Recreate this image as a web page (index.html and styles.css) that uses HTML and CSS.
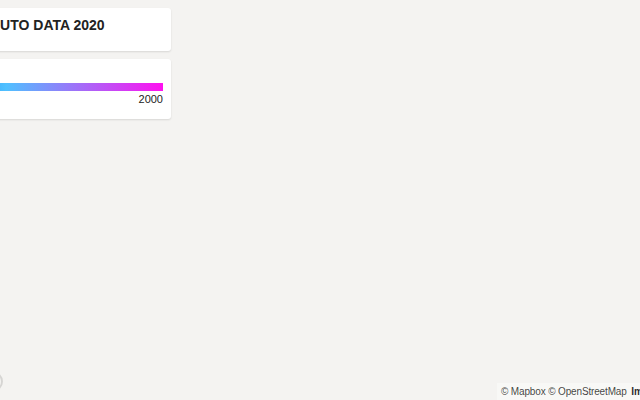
FILE: index.html
```html
<!DOCTYPE html>
<html lang="en">
<head>
    <meta charset="UTF-8">
    <meta name="viewport" content="width=device-width, initial-scale=1.0">
    <title>Auto Data 2020</title>
    <link rel="stylesheet" href="styles.css">
</head>
<body>
    <div class="map" id="map">
        <div class="overlay">
            <div class="panel title-panel">
                <h1>AUTO DATA 2020</h1>
            </div>
            <div class="panel legend-panel">
                <div class="legend-bar"></div>
                <div class="legend-labels">
                    <span>0</span>
                    <span>2000</span>
                </div>
            </div>
        </div>

        <div class="map-logo"></div>
        <div class="attrib">
            <a href="#">&copy; Mapbox</a>
            <a href="#">&copy; OpenStreetMap</a>
            <a href="#" class="improve">Improve this map</a>
        </div>
    </div>
</body>
</html>
```

FILE: styles.css
```css
html, body {
    margin: 0;
    padding: 0;
    height: 100%;
}
body {
    font-family: "Liberation Sans", Arial, sans-serif;
    color: #333;
    overflow: hidden;
}
.map {
    position: relative;
    width: 100%;
    height: 100%;
    background-color: #f4f3f1;
    overflow: hidden;
}
.overlay {
    position: absolute;
    top: 8px;
    left: -69px;
    width: 240px;
    display: flex;
    flex-direction: column;
    gap: 8px;
}
.panel {
    background: #fff;
    border-radius: 3px;
    box-shadow: 0 1px 2px rgba(0,0,0,0.12);
}
.title-panel {
    height: 43px;
    padding: 0 10px 0 59px;
    box-sizing: border-box;
}
.title-panel h1 {
    margin: 0;
    padding-top: 9px;
    font-size: 14px;
    line-height: 16px;
    font-weight: bold;
    color: #222;
}
.legend-panel {
    height: 60px;
    box-sizing: border-box;
    padding: 24px 8px 0 8px;
}
.legend-bar {
    height: 8px;
    background: linear-gradient(to right, #0e7ff0, #50c0ff 30%, #ff10f0);
}
.legend-labels {
    display: flex;
    justify-content: space-between;
    font-size: 11px;
    line-height: 14px;
    margin-top: 1px;
    color: #222;
}
.map-logo {
    position: absolute;
    left: -18px;
    bottom: 8px;
    width: 21px;
    height: 21px;
    border-radius: 50%;
    border: 2px solid rgba(0,0,0,0.12);
    box-sizing: border-box;
}
.attrib {
    position: absolute;
    left: 497px;
    bottom: 0;
    white-space: nowrap;
    padding: 0 4px;
    font-size: 10px;
    letter-spacing: -0.15px;
    line-height: 17px;
    background: rgba(255,255,255,0.4);
}
.attrib a {
    color: rgba(0,0,0,0.75);
    text-decoration: none;
}
.attrib a.improve {
    font-weight: bold;
    margin-left: 2px;
    color: rgba(0,0,0,0.85);
}
```
